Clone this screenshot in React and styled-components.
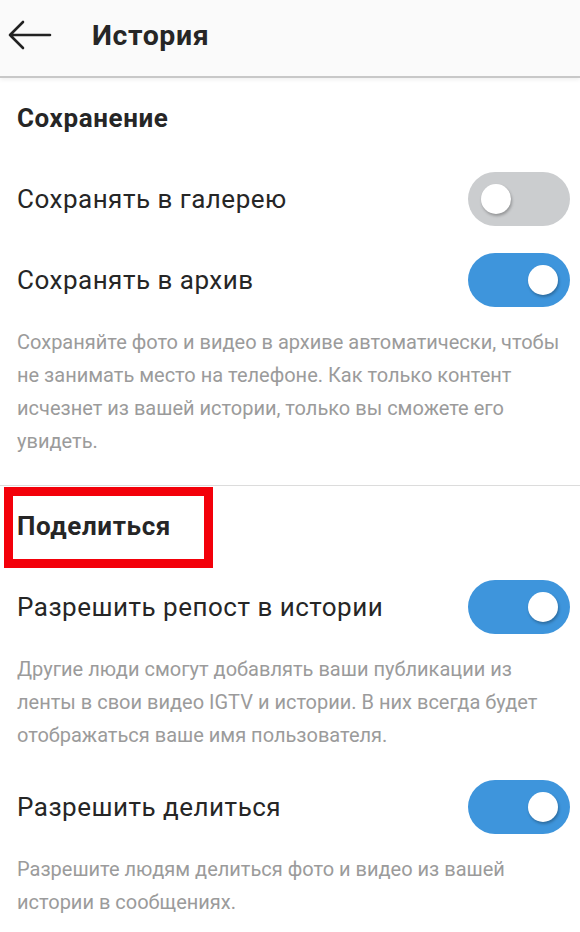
import React, { useState } from 'react'
import styled, { createGlobalStyle } from 'styled-components'

const GlobalStyle = createGlobalStyle`
  html, body {
    margin: 0;
    padding: 0;
    background: #ffffff;
  }
  body {
    font-family: Roboto, "Liberation Sans", Arial, sans-serif;
    -webkit-font-smoothing: antialiased;
  }
`

const Page = styled.div`
  width: 580px;
  min-height: 932px;
  background: #ffffff;
  overflow: hidden;
`

const Header = styled.header`
  box-sizing: border-box;
  height: 78px;
  padding-bottom: 6px;
  display: flex;
  align-items: center;
  background: #fafafa;
  border-bottom: 2px solid #c8c8c8;
  box-shadow: 0 2px 4px rgba(0, 0, 0, 0.06);
  position: relative;
`

const BackButton = styled.button`
  width: 60px;
  height: 60px;
  padding: 0 0 0 8px;
  margin-right: 32px;
  border: none;
  background: transparent;
  display: flex;
  align-items: center;
  cursor: pointer;
`

const HeaderTitle = styled.h1`
  margin: 0;
  font-size: 28.5px;
  font-weight: 700;
  color: #262626;
  letter-spacing: 0.6px;
`

const Section = styled.section`
  padding: 0 10px ${p => (p.$divider ? '13px' : '10px')} 17px;
  border-bottom: ${p => (p.$divider ? '1px solid #dcdcdc' : 'none')};
`

const SectionTitle = styled.h2`
  position: relative;
  margin: 0;
  height: 80px;
  display: flex;
  align-items: center;
  font-size: 26px;
  font-weight: 700;
  color: #262626;
  letter-spacing: 0.6px;

  ${p =>
    p.$marked &&
    `
    &::after {
      content: '';
      position: absolute;
      top: 1px;
      left: -13px;
      width: 191px;
      height: 63px;
      border: 9px solid #f3000a;
    }
  `}
`

const Row = styled.div`
  height: 81px;
  display: flex;
  align-items: center;
  justify-content: space-between;
`

const RowLabel = styled.span`
  font-size: 26px;
  letter-spacing: 0.5px;
  color: #262626;
`

const Track = styled.button`
  position: relative;
  width: 102px;
  height: 54px;
  padding: 0;
  border: none;
  border-radius: 27px;
  background: ${p => (p.$on ? '#3e95dc' : '#cbcdcf')};
  cursor: pointer;
  transition: background 0.2s;
`

const Knob = styled.span`
  position: absolute;
  top: 12px;
  left: ${p => (p.$on ? '60px' : '13px')};
  width: 30px;
  height: 30px;
  border-radius: 50%;
  background: #ffffff;
  box-shadow: 1px 2px 3px rgba(0, 0, 0, 0.28);
  transition: left 0.2s;
`

const Description = styled.p`
  margin: 6px 0 14px;
  font-size: 20px;
  line-height: 33px;
  color: #9b9b9b;
`

function Toggle({ initial }) {
  const [on, setOn] = useState(initial)
  return (
    <Track $on={on} onClick={() => setOn(!on)} aria-pressed={on}>
      <Knob $on={on} />
    </Track>
  )
}

function BackArrow() {
  return (
    <svg width="44" height="32" viewBox="0 0 44 32" fill="none">
      <path
        d="M2 16 H42 M15 3 L2 16 L15 29"
        stroke="#222"
        strokeWidth="2.6"
        strokeLinecap="round"
        strokeLinejoin="round"
      />
    </svg>
  )
}

export default function App() {
  return (
    <Page>
      <GlobalStyle />
      <Header>
        <BackButton>
          <BackArrow />
        </BackButton>
        <HeaderTitle>История</HeaderTitle>
      </Header>

      <Section $divider>
        <SectionTitle>Сохранение</SectionTitle>
        <Row>
          <RowLabel>Сохранять в галерею</RowLabel>
          <Toggle initial={false} />
        </Row>
        <Row>
          <RowLabel>Сохранять в архив</RowLabel>
          <Toggle initial={true} />
        </Row>
        <Description>
          Сохраняйте фото и видео в архиве автоматически, чтобы не занимать
          место на телефоне. Как только контент исчезнет из вашей истории,
          только вы сможете его увидеть.
        </Description>
      </Section>

      <Section>
        <SectionTitle $marked>Поделиться</SectionTitle>
        <Row>
          <RowLabel>Разрешить репост в истории</RowLabel>
          <Toggle initial={true} />
        </Row>
        <Description>
          Другие люди смогут добавлять ваши публикации из ленты в свои видео
          IGTV и истории. В них всегда будет отображаться ваше имя
          пользователя.
        </Description>
        <Row>
          <RowLabel>Разрешить делиться</RowLabel>
          <Toggle initial={true} />
        </Row>
        <Description>
          Разрешите людям делиться фото и видео из вашей истории в
          сообщениях.
        </Description>
      </Section>
    </Page>
  )
}
